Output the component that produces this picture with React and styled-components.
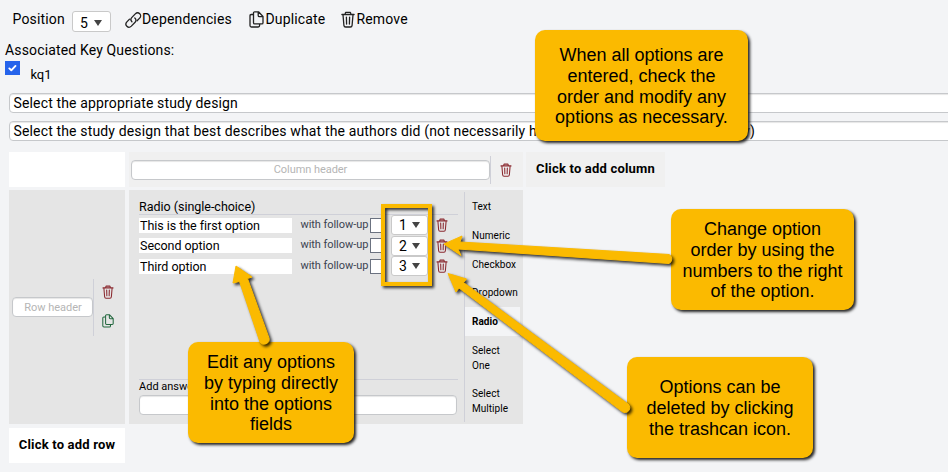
import React from "react";
import styled, { createGlobalStyle } from "styled-components";

const GlobalStyle = createGlobalStyle`
  * { box-sizing: border-box; }
  body {
    margin: 0;
    background: #f3f4f6;
    font-family: Roboto, sans-serif;
    color: #000;
    overflow: hidden;
  }
`;

const Page = styled.div`
  position: relative;
  width: 948px;
  height: 472px;
  overflow: hidden;
  background: #f3f4f6;
`;

const Toolbar = styled.div`
  display: flex;
  align-items: flex-start;
  height: 42px;
  padding: 11px 0 0 12.5px;
`;

const Label = styled.span`
  font-size: ${(p) => p.$size || 14}px;
  line-height: ${(p) => p.$line || 17}px;
  letter-spacing: ${(p) => p.$spacing ?? 0.15}px;
  color: ${(p) => p.$color || "#000"};
  white-space: nowrap;
`;

const ToolbarAction = styled.div`
  display: flex;
  flex: none;
  width: ${(p) => p.$width}px;
  gap: ${(p) => p.$gap || 0}px;
`;

const SelectBox = styled.div`
  display: flex;
  align-items: center;
  justify-content: space-between;
  flex: none;
  width: ${(p) => p.$width}px;
  height: ${(p) => p.$height}px;
  padding: ${(p) => p.$pad};
  font-size: 14px;
  line-height: 16px;
  background: #fff;
  border: 1px solid #c9c9c9;
  border-radius: 3px;
`;

const Caret = styled.span`
  border-left: 4px solid transparent;
  border-right: 4px solid transparent;
  border-top: 6px solid #444;
`;

const PositionGroup = styled.div`
  display: flex;
  justify-content: space-between;
  flex: none;
  width: 98.5px;
  margin-right: 14px;
`;

const Questions = styled.div`
  padding-left: 5px;
  height: 51px;
`;

const QuestionRow = styled.div`
  display: flex;
  gap: 10.5px;
  padding-top: 2px;
`;

const Checked = styled.span`
  display: flex;
  width: 15px;
  height: 14px;
  background: #2563eb;
`;

const QuestionName = styled(Label)`
  margin-top: 5px;
`;

const Field = styled.div`
  display: flex;
  align-items: center;
  justify-content: ${(p) => (p.$center ? "center" : "flex-start")};
  flex: none;
  width: ${(p) => p.$width}px;
  height: 20px;
  padding-left: ${(p) => (p.$center ? 1 : 3.5)}px;
  background: #fff;
  border: 1px solid #c6c8cb;
  border-radius: 4px;
  box-shadow: inset 0 1px 1px rgba(0, 0, 0, 0.1);
`;

const WideFields = styled.div`
  display: flex;
  flex-direction: column;
  gap: 8px;
  margin-left: 9px;
`;

const Builder = styled.div`
  display: grid;
  grid-template-columns: 116px 394px 139px;
  grid-template-rows: 35px 234px 35px;
  column-gap: 3.5px;
  margin: 11px 0 0 9px;
`;

const Cell = styled.div`
  display: flex;
  align-items: center;
  grid-column: ${(p) => p.$col};
  grid-row: ${(p) => p.$row};
  background: ${(p) => p.$bg};
`;

const BodyCell = styled(Cell)`
  margin: 3px 0 -3px;
`;

const AddCell = styled(Cell)`
  justify-content: center;
  padding-bottom: 2px;
  margin-top: ${(p) => p.$drop || 0}px;
  margin-bottom: -${(p) => p.$drop || 0}px;
  font-size: 13px;
  font-weight: 700;
  letter-spacing: 0.19px;
  white-space: nowrap;
`;

const ColumnCell = styled(Cell)`
  padding: 0 2px 0 2px;
`;

const Separator = styled.span`
  flex: none;
  width: 1px;
  height: ${(p) => p.$height}px;
  background: #cfd0d8;
`;

const IconSlot = styled.div`
  display: flex;
  justify-content: center;
  flex: 1;
`;

const RowCell = styled(BodyCell)`
  padding-left: 3px;
`;

const IconStack = styled.div`
  display: flex;
  flex: 1;
  flex-direction: column;
  align-items: center;
  gap: 15px;
  padding: 0 3px 1px 0;
`;

const Editor = styled.div`
  display: flex;
  flex-direction: column;
  flex: none;
  width: 335px;
  height: 234px;
  padding: 8px 6px 0 10.5px;
`;

const EditorTitle = styled.div`
  height: 17px;
  line-height: 17px;
  font-size: 12.5px;
  letter-spacing: -0.02px;
  border-bottom: 1px solid #cfd0d8;
`;

const OptionRow = styled.div`
  display: flex;
  align-items: center;
  height: 20.5px;
`;

const OptionInput = styled.div`
  flex: none;
  width: 153px;
  height: 15px;
  padding-left: 1px;
  background: #fff;
  font-size: 12.5px;
  line-height: 16px;
  letter-spacing: -0.04px;
  white-space: nowrap;
`;

const FollowUp = styled.span`
  flex: none;
  width: 69.5px;
  margin-left: 8.5px;
  font-size: 11px;
  line-height: 14px;
  letter-spacing: -0.06px;
  padding-bottom: 1px;
  color: #3b4351;
  white-space: nowrap;
`;

const EmptyCheck = styled.span`
  flex: none;
  width: 15px;
  height: 15px;
  margin-right: 6px;
  border: 1px solid #6b7280;
  background: #fff;
`;

const OptionTrash = styled.span`
  display: flex;
  margin-left: 8px;
`;

const AddAnswer = styled.div`
  display: flex;
  flex-direction: column;
  gap: 1px;
  margin-top: 102px;
  border-top: 1px solid #cfd0d8;
`;

const TypeList = styled.div`
  display: flex;
  flex-direction: column;
  width: 56px;
  height: 230px;
  align-self: flex-start;
  margin-top: 2px;
  border-left: 1px solid #cfd0d8;
`;

const TypeItem = styled.div`
  height: ${(p) => p.$height || 28.8}px;
  padding: 7px 0 0 7.5px;
  font-size: 10px;
  line-height: 15px;
  letter-spacing: 0.04px;
  font-weight: ${(p) => (p.$active ? 700 : 400)};
  background: ${(p) => (p.$active ? "#f3f4f6" : "transparent")};
`;

const Callout = styled.div`
  position: absolute;
  left: ${(p) => p.$x}px;
  top: ${(p) => p.$y}px;
  width: ${(p) => p.$w}px;
  height: ${(p) => p.$h}px;
  display: flex;
  align-items: center;
  justify-content: center;
  padding-top: 2px;
  border-radius: 10px;
  background: #fbba00;
  box-shadow: 2px 2px 3px #222;
  font-family: "Liberation Sans", Arial, sans-serif;
  font-size: 18px;
  line-height: 20.8px;
  text-align: center;
  white-space: pre;
`;

const Overlay = styled.svg`
  position: absolute;
  left: 0;
  top: 0;
  filter: drop-shadow(2px 2px 1.5px rgba(0, 0, 0, 0.8));
`;

const TrashIcon = ({ color = "#222", w = 14, h = 17 }) => (
  <svg width={w} height={h} viewBox="0 0 14 17" fill="none" stroke={color} strokeWidth="1.3" strokeLinecap="round" strokeLinejoin="round">
    <path d="M.9 3.5h12.2M4 3.4l.6-2h4.8l.6 2M2 3.7l.9 10.6q.2 1.7 1.7 1.7h4.8q1.5 0 1.7-1.7L12 3.7M5.4 6.1l.2 7M8.6 6.1l-.2 7" />
  </svg>
);

const CopyIcon = ({ color = "#222", w = 15, h = 17 }) => (
  <svg width={w} height={h} viewBox="0 0 15 17" fill="none" stroke={color} strokeWidth="1.3" strokeLinejoin="round">
    <path d="M4.5 2Q4.5.8 5.7.8h3.8l4.5 4.7v6.2q0 1.2-1.2 1.2H5.7q-1.2 0-1.2-1.2zM9.2 1v3.5q0 1.2 1.2 1.2H14" />
    <path d="M4.2 3.5H2.3Q1 3.5 1 4.8v9.7Q1 16 2.4 16h6.8q1.4 0 1.4-1.4V13" />
  </svg>
);

const LinkIcon = () => (
  <svg width="17" height="18" viewBox="0 0 18 18" fill="none" stroke="#222" strokeWidth="1.4" strokeLinecap="round">
    <path d="M7.3 10.8C5.8 9.3 6 7.7 7.1 6.5l3.8-4c1.3-1.3 3.3-1.5 4.7-.2 1.3 1.3 1.2 3.4-.1 4.7l-2.7 2.8" />
    <path d="M10.4 6.9c1.6 1.4 1.5 3.2.3 4.4l-4 4.2c-1.3 1.3-3.4 1.5-4.7.2-1.4-1.4-1.3-3.3 0-4.7l2.8-2.9" />
  </svg>
);

const CheckMark = () => (
  <svg width="15" height="14" viewBox="0 0 15 14" fill="none" stroke="#fff" strokeWidth="1.9" strokeLinecap="round" strokeLinejoin="round">
    <path d="M4.3 7.4l2 1.9 4.2-4.4" />
  </svg>
);

const OPTIONS = ["This is the first option", "Second option", "Third option"];

export default function App() {
  return (
    <>
      <GlobalStyle />
      <Page>
        <Toolbar>
          <PositionGroup>
            <Label>Position</Label>
            <SelectBox $width={39} $height={21} $pad="3px 8px 0 7px">
              5<Caret />
            </SelectBox>
          </PositionGroup>
          <ToolbarAction $width={124}>
            <LinkIcon />
            <Label>Dependencies</Label>
          </ToolbarAction>
          <ToolbarAction $width={91.5} $gap={1.5}>
            <CopyIcon />
            <Label>Duplicate</Label>
          </ToolbarAction>
          <ToolbarAction $width={80} $gap={2}>
            <TrashIcon />
            <Label>Remove</Label>
          </ToolbarAction>
        </Toolbar>
        <Questions>
          <Label as="div">Associated Key Questions:</Label>
          <QuestionRow>
            <Checked><CheckMark /></Checked>
            <QuestionName $size={13} $spacing={-0.1}>kq1</QuestionName>
          </QuestionRow>
        </Questions>
        <WideFields>
          <Field $width={960}><Label>Select the appropriate study design</Label></Field>
          <Field $width={960}>
            <Label>Select the study design that best describes what the authors did (not necessarily how they described it in their study)</Label>
          </Field>
        </WideFields>
        <Builder>
          <Cell $col={1} $row={1} $bg="#fff" />
          <ColumnCell $col={2} $row={1} $bg="#f0f0f0">
            <Field $width={359} $center>
              <Label $size={11} $spacing={-0.05} $color="#b5b5b5">Column header</Label>
            </Field>
            <Separator $height={28} />
            <IconSlot><TrashIcon color="#8b2a30" w={12} h={14} /></IconSlot>
          </ColumnCell>
          <AddCell $col={3} $row={1} $bg="#f0f0f0">Click to add column</AddCell>
          <RowCell $col={1} $row={2} $bg="#e5e5e5">
            <Field $width={81} $center>
              <Label $size={11} $spacing={0} $color="#b5b5b5">Row header</Label>
            </Field>
            <Separator $height={57} />
            <IconStack>
              <TrashIcon color="#8b2a30" w={12} h={14} />
              <CopyIcon color="#23683f" w={12} h={14} />
            </IconStack>
          </RowCell>
          <BodyCell $col={2} $row={2} $bg="#e5e5e5">
            <Editor>
              <EditorTitle>Radio (single-choice)</EditorTitle>
              {OPTIONS.map((text, i) => (
                <OptionRow key={text}>
                  <OptionInput>{text}</OptionInput>
                  <FollowUp>with follow-up</FollowUp>
                  <EmptyCheck />
                  <SelectBox $width={37} $height={20} $pad="0 7px">
                    {i + 1}<Caret />
                  </SelectBox>
                  <OptionTrash><TrashIcon color="#8b2a30" w={12} h={14} /></OptionTrash>
                </OptionRow>
              ))}
              <AddAnswer>
                <Label $size={11} $line={14} $spacing={0}>Add answer</Label>
                <Field $width={318} />
              </AddAnswer>
            </Editor>
            <TypeList>
              <TypeItem>Text</TypeItem>
              <TypeItem>Numeric</TypeItem>
              <TypeItem>Checkbox</TypeItem>
              <TypeItem>Dropdown</TypeItem>
              <TypeItem $active>Radio</TypeItem>
              <TypeItem $height={43}>Select<br />One</TypeItem>
              <TypeItem $height={43}>Select<br />Multiple</TypeItem>
            </TypeList>
          </BodyCell>
          <AddCell $col={1} $row={3} $bg="#fff" $drop={7}>Click to add row</AddCell>
        </Builder>

        <Callout $x={535} $y={30} $w={213} $h={111}>{"When all options are\nentered, check the\norder and modify any\noptions as necessary."}</Callout>
        <Callout $x={671} $y={209} $w={183} $h={101}>{"Change option\norder by using the\nnumbers to the right\nof the option."}</Callout>
        <Callout $x={188} $y={342} $w={166} $h={101}>{"Edit any options\nby typing directly\ninto the options\nfields"}</Callout>
        <Callout $x={627} $y={357} $w={186} $h={101}>{"Options can be\ndeleted by clicking\nthe trashcan icon."}</Callout>
        <Overlay width="948" height="472" viewBox="0 0 948 472">
          <rect x="383" y="206" width="47" height="78" fill="none" stroke="#fbba00" strokeWidth="4" />
          <g fill="#fbba00" stroke="#fbba00" strokeWidth="1" strokeLinejoin="round">
            <path d="M236 266L252 277L247.5 278.5L269 338A5 5 0 0 1 260 342L239.5 281.5L233 283Z" />
            <path d="M444 244L462 236L460 242L669 254.5A5 5 0 0 1 669 263.5L458 249L461 255.5Z" />
            <path d="M448 273.5L466.5 279L463.5 282.5L628 404A4.5 4.5 0 0 1 622 411.5L459 288L456 292Z" />
          </g>
        </Overlay>
      </Page>
    </>
  );
}
